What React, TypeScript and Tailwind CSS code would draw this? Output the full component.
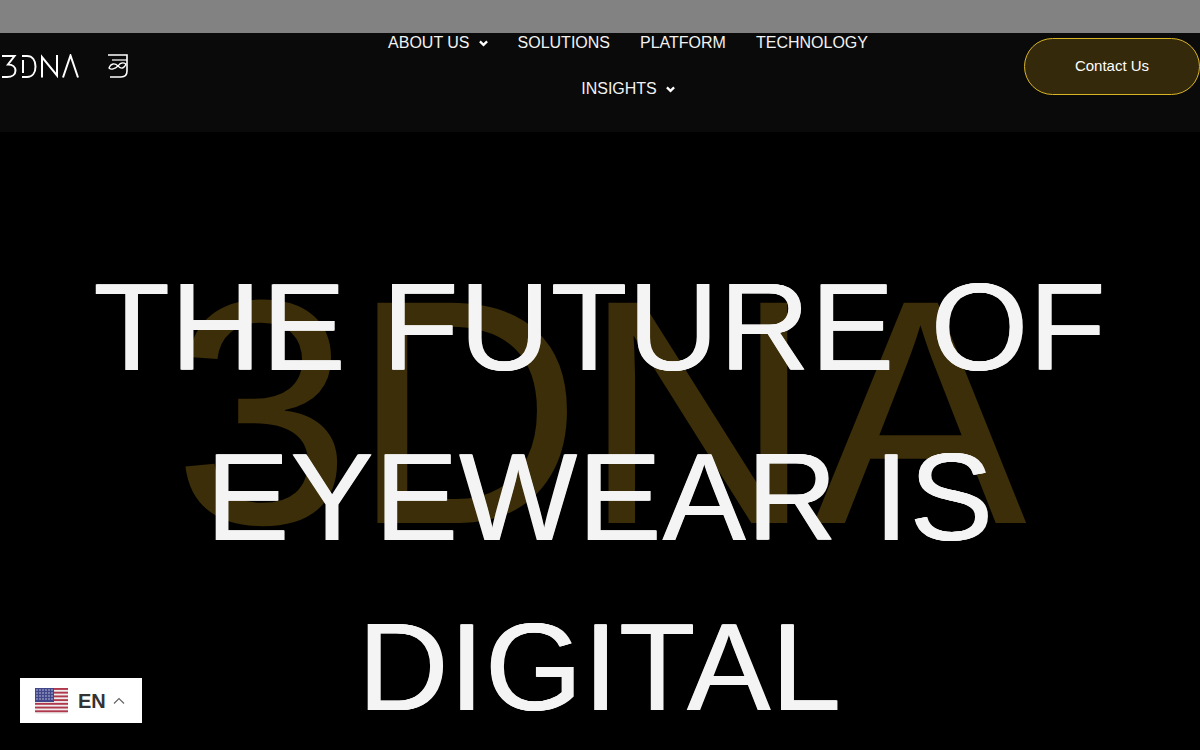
const sans = "font-['Liberation_Sans',Arial,sans-serif]";

function Caret() {
  return (
    <svg viewBox="0 0 10 7" className="w-[9px] h-[7px] ml-[9px] mt-[1px]" fill="none" stroke="white" strokeWidth="2.6">
      <path d="M1 1.2 L5 5 L9 1.2" />
    </svg>
  );
}

function Logo() {
  return (
    <div className="flex items-center gap-[28px]">
      <svg viewBox="0 0 80 24" className="w-[80px] h-[24px]" fill="none" stroke="white" strokeWidth="2">
        <path d="M2 2 H14.5 L8 10.5 C12.5 10.5 15.5 13 15.5 16.5 C15.5 20.5 12 23 7 23 H2" />
        <path d="M22 2 H27 C32.5 2 35.5 6.5 35.5 12.5 C35.5 18.5 32.5 23 27 23 H22 M23 6 V19" />
        <path d="M42 23.5 V3 L57 21.5 V1" />
        <path d="M63 23.5 L70.5 1.5 L78 23.5" />
      </svg>
      <svg viewBox="0 0 20 24" className="w-[20px] h-[24px]" fill="none" stroke="white" strokeWidth="1.6">
        <path d="M0 1 H19 V17 C19 21 16.5 23 13 23 H2" />
        <path d="M4 6 H19" strokeWidth="1.2" />
        <path d="M1 14 C3 9 7 9 10 12 C13 15 16 15 18 10 C15 8 12 9 10 12 C7 15 3 16 1 14 Z" strokeWidth="1.3" />
      </svg>
    </div>
  );
}

function Flag() {
  const stripes = [0, 1, 2, 3, 4, 5, 6];
  return (
    <svg viewBox="0 0 33 26" className="w-[33px] h-[26px]">
      <rect width="33" height="26" rx="3" fill="#eeeeee" />
      {stripes.map((i) => (
        <rect key={i} y={i * 3.72} width="33" height="1.9" fill="#b0384c" />
      ))}
      <rect width="19" height="14" fill="#41478a" />
      {[2, 5, 8, 11].map((y) =>
        [2, 5, 8, 11, 14, 17].map((x) => (
          <circle key={`${x}-${y}`} cx={x} cy={y} r="0.7" fill="#dfe0ee" />
        )),
      )}
    </svg>
  );
}

export default function App() {
  return (
    <div className={`relative h-[750px] overflow-hidden bg-black text-white ${sans}`}>
      <div className="absolute top-0 left-0 right-0 h-[33px] bg-[#828282] z-10" />

      <header className="h-[132px] bg-[#0a0a0a] flex items-center">
        <div className="w-[364px]">
          <Logo />
        </div>
        <nav className="w-[528px] flex flex-wrap justify-center text-[16px] leading-[46px] text-[#f2f2f2]">
          <a className="flex items-center px-[15px]">
            ABOUT US
            <Caret />
          </a>
          <a className="px-[15px]">SOLUTIONS</a>
          <a className="px-[15px]">PLATFORM</a>
          <a className="px-[15px]">TECHNOLOGY</a>
          <a className="flex items-center px-[15px]">
            INSIGHTS
            <Caret />
          </a>
        </nav>
        <button className="ml-auto w-[176px] h-[57px] pt-[1px] rounded-[29px] border border-[#d9b526] bg-[#35290c] text-[15px] font-normal">
          Contact Us
        </button>
      </header>

      <main className="relative">
        <div className="absolute left-0 right-0 top-[96px] text-center text-[320px] leading-[368px] text-[#3c2e08]">
          3DNA
        </div>
        <h1 className="relative pt-[110px] text-center font-normal text-[125px] leading-[170px] tracking-[1px] text-[#f4f4f4] [text-shadow:0.6px_0_0_#f4f4f4,-0.6px_0_0_#f4f4f4]">
          THE FUTURE OF
          <br />
          EYEWEAR IS
          <br />
          DIGITAL
        </h1>
      </main>

      <div className="absolute left-[20px] top-[678px] w-[122px] h-[45px] bg-white flex items-center pl-[15px] z-20">
        <Flag />
        <span className="ml-[10px] text-[20px] font-bold text-[#333333]">EN</span>
        <svg viewBox="0 0 12 8" className="w-[12px] h-[8px] ml-[7px]" fill="none" stroke="#666666" strokeWidth="1.2">
          <path d="M1 6.5 L6 1.5 L11 6.5" />
        </svg>
      </div>
    </div>
  );
}
